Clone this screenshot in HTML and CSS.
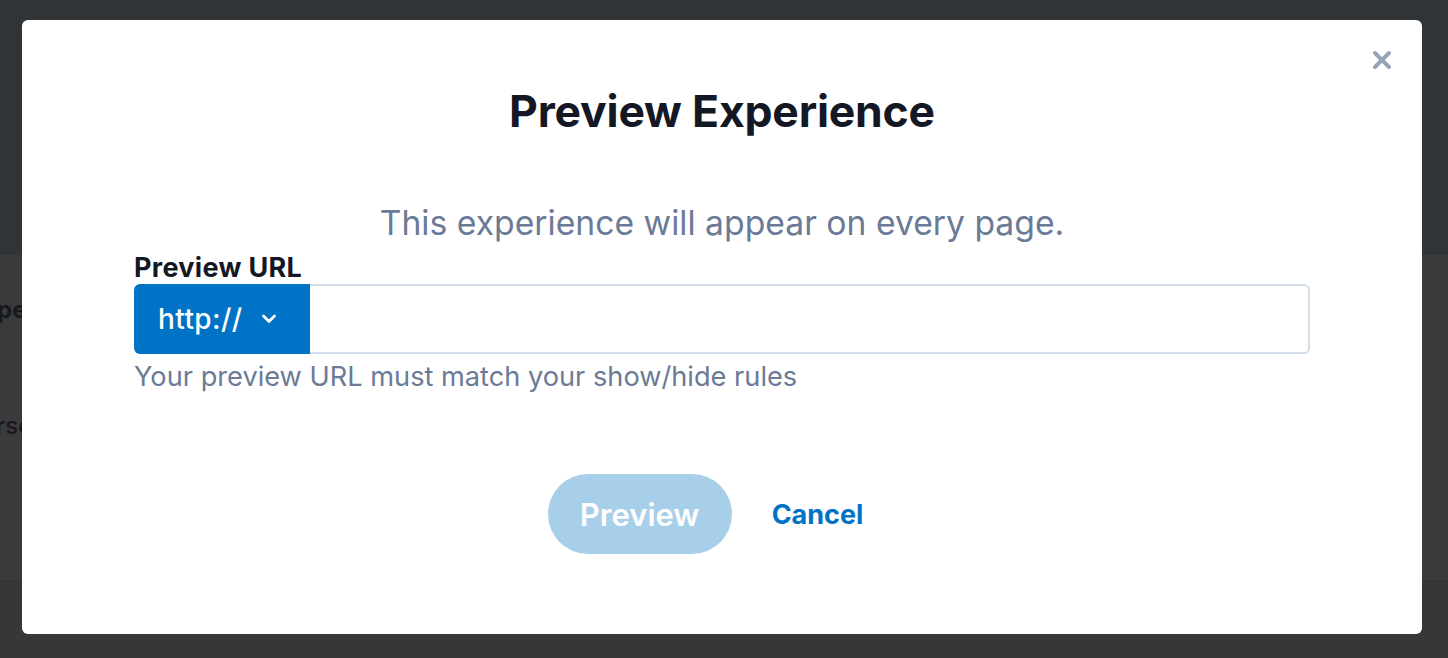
FILE: index.html
```html
<!DOCTYPE html>
<html>
<head>
<meta charset="utf-8">
<link rel="stylesheet" href="styles.css">
</head>
<body>
<div class="page">
  <div class="page-top"></div>
  <div class="page-main">
    <div class="page-row row1">pe</div>
    <div class="page-row row2">rsc</div>
  </div>
  <div class="page-foot"></div>
</div>
<div class="modal">
  <button class="close" aria-label="Close">
    <svg width="20" height="20" viewBox="0 0 20 20"><path d="M3 3 L17 17 M17 3 L3 17" stroke="#97a3b9" stroke-width="4" stroke-linecap="round"/></svg>
  </button>
  <div class="modal-body">
    <h1 class="title">Preview Experience</h1>
    <p class="subtitle">This experience will appear on every page.</p>
    <div class="field">
      <label class="label">Preview URL</label>
      <div class="input-group">
        <div class="proto">
          <span>http://</span>
          <svg width="16" height="10" viewBox="0 0 16 10"><path d="M2.5 2 L8 7.5 L13.5 2" fill="none" stroke="#fff" stroke-width="2.8" stroke-linecap="round" stroke-linejoin="round"/></svg>
        </div>
        <div class="url-input"></div>
      </div>
      <div class="help">Your preview URL must match your show/hide rules</div>
    </div>
    <div class="actions">
      <button class="btn-preview">Preview</button>
      <a class="btn-cancel">Cancel</a>
    </div>
  </div>
</div>
</body>
</html>
```

FILE: styles.css
```css
html, body {
  margin: 0;
  padding: 0;
}
body {
  width: 1448px;
  height: 658px;
  overflow: hidden;
  position: relative;
  font-family: Inter, "Noto Sans", sans-serif;
  background: #353739;
}
.page {
  display: flex;
  flex-direction: column;
  height: 658px;
}
.page-top {
  height: 255px;
  background: #313437;
}
.page-main {
  height: 323px;
  background: #393a3c;
  border-bottom: 1px solid #3e4042;
  display: flex;
  flex-direction: column;
  overflow: hidden;
}
.page-row {
  color: #17181a;
  font-weight: 700;
  font-size: 24px;
  line-height: 30px;
  white-space: nowrap;
}
.row1 {
  margin-top: 40px;
  margin-left: -3px;
}
.row2 {
  margin-top: 86px;
  margin-left: -4px;
  font-weight: 500;
}
.page-foot {
  flex: 1;
  background: #353739;
}
.modal {
  position: absolute;
  left: 22px;
  top: 20px;
  width: 1400px;
  height: 614px;
  background: #fff;
  border-radius: 6px;
  box-sizing: border-box;
}
.close {
  position: absolute;
  top: 30px;
  right: 30px;
  background: none;
  border: 0;
  padding: 0;
  width: 20px;
  height: 20px;
  display: flex;
}
.modal-body {
  display: flex;
  flex-direction: column;
  align-items: center;
  padding: 65px 112px 0;
}
.title {
  margin: 0;
  font-size: 44.5px;
  line-height: 52px;
  font-weight: 700;
  color: #141824;
  letter-spacing: -0.2px;
}
.subtitle {
  margin: 66px 0 0;
  font-size: 33.7px;
  line-height: 40px;
  color: #6b7a96;
  font-weight: 400;
}
.field {
  align-self: stretch;
  display: flex;
  flex-direction: column;
  margin-top: 10px;
}
.label {
  font-size: 27px;
  line-height: 30px;
  font-weight: 700;
  color: #141824;
  letter-spacing: 0.3px;
}
.input-group {
  display: flex;
  height: 70px;
  margin-top: 1px;
}
.proto {
  width: 176px;
  background: #0073c6;
  border-radius: 6px 0 0 6px;
  display: flex;
  align-items: center;
  box-sizing: border-box;
  padding-left: 24px;
  gap: 19px;
  color: #fff;
  font-size: 28px;
  font-weight: 500;
  letter-spacing: 0.4px;
}
.url-input {
  flex: 1;
  border: 2px solid #d3dde9;
  border-left: 0;
  border-radius: 0 6px 6px 0;
}
.help {
  margin-top: 7px;
  font-size: 27.2px;
  line-height: 32px;
  color: #6b7a96;
}
.actions {
  display: flex;
  align-items: center;
  gap: 40px;
  margin-top: 81px;
  padding-right: 33px;
}
.btn-preview {
  width: 184px;
  height: 80px;
  border: 0;
  border-radius: 40px;
  background: #a8cfea;
  color: #fff;
  font-family: Inter, "Noto Sans", sans-serif;
  font-size: 31px;
  font-weight: 600;
  padding: 0;
}
.btn-cancel {
  color: #0073c6;
  font-size: 27px;
  font-weight: 700;
}
```
